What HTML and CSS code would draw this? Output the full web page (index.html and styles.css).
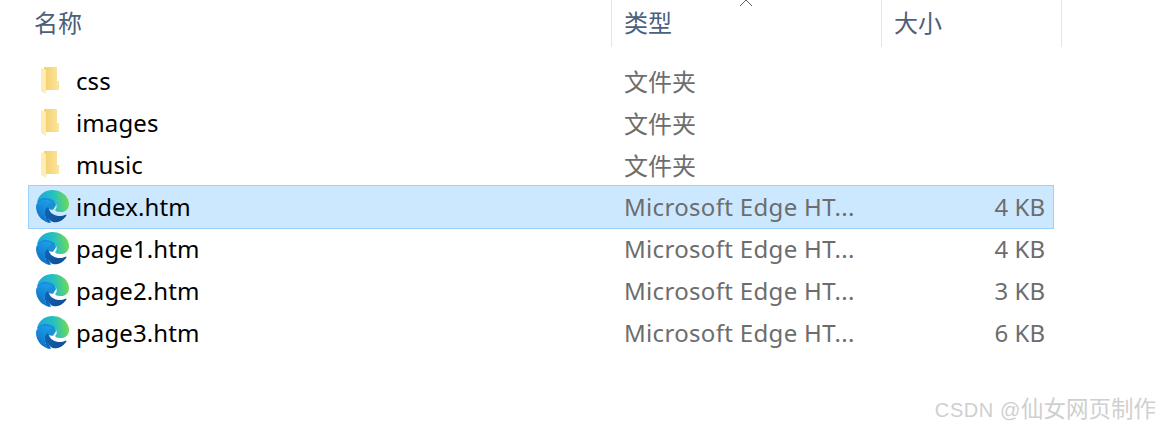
FILE: index.html
```html
<!DOCTYPE html>
<html lang="zh-CN">
<head>
  <meta charset="UTF-8">
  <title>文件列表</title>
  <link rel="stylesheet" href="styles.css">
</head>
<body>

<svg class="defs" width="0" height="0" aria-hidden="true">
  <defs>
    <linearGradient id="edgeTop" x1="0" y1="0.6" x2="1" y2="0.5">
      <stop offset="0" stop-color="#1ba6e0"/>
      <stop offset="0.55" stop-color="#26c0c0"/>
      <stop offset="1" stop-color="#74dc50"/>
    </linearGradient>
    <linearGradient id="edgeLeft" x1="0.7" y1="0" x2="0.3" y2="1">
      <stop offset="0" stop-color="#1b9fe8"/>
      <stop offset="1" stop-color="#0f6cc4"/>
    </linearGradient>
    <linearGradient id="edgeBottom" x1="0" y1="0" x2="1" y2="0.6">
      <stop offset="0" stop-color="#0e62b4"/>
      <stop offset="1" stop-color="#114f98"/>
    </linearGradient>
    <linearGradient id="folderBack" x1="0" y1="0" x2="1" y2="0">
      <stop offset="0" stop-color="#f4cf6c"/>
      <stop offset="1" stop-color="#fbe5a0"/>
    </linearGradient>
    <symbol id="edge" viewBox="0 0 24 24">
      <path fill="#1a8fd6" d="M0.5 9Q2 5 7 5Q11 5 14 7L14.5 11L12.4 14.4Q10.5 14.6 8.6 13.6L6.5 14L6 8.5Z"/>
      <path fill="#0e62b4" d="M6 17Q6 13 8.8 12.5L9 20L11 24L8 23Z"/>
      <path fill="url(#edgeBottom)" d="M21.86 17.86q.14 0 .25.12.1.13.1.25t-.11.33l-.32.46-.43.53-.44.5q-.21.25-.38.42l-.22.23q-.58.53-1.34 1.04-.76.51-1.6.91-.86.4-1.74.64t-1.67.24q-.9 0-1.69-.28-.8-.28-1.48-.78-.68-.5-1.22-1.17-.53-.66-.92-1.44-.38-.77-.58-1.6-.2-.83-.2-1.67 0-1 .32-1.96.33-.97.87-1.8.14.95.55 1.77.41.82 1.02 1.5.6.68 1.38 1.21.78.54 1.64.9.86.36 1.77.56.92.2 1.8.2 1.12 0 2.18-.24 1.06-.23 2.06-.72l.2-.1.2-.05z"/>
      <path fill="url(#edgeLeft)" d="M6.36 16.59q0 1.1.27 2.15.27 1.06.78 2.03.51.96 1.24 1.77.74.82 1.66 1.4-1.47-.2-2.8-.74-1.33-.55-2.48-1.37-1.15-.83-2.08-1.9-.92-1.07-1.58-2.33T.36 14.94Q0 13.54 0 12.06q0-.81.32-1.49.31-.68.83-1.23.53-.55 1.2-.96.66-.4 1.35-.66.74-.27 1.5-.39.78-.12 1.55-.12.7 0 1.42.1.72.12 1.4.35.68.23 1.32.57.63.35 1.16.83-.35 0-.7.07-.33.07-.65.23v-.02q-.63.28-1.2.74-.57.46-1.05 1.04-.48.58-.87 1.26-.38.67-.65 1.39-.27.71-.42 1.44-.15.72-.15 1.38z"/>
      <path fill="url(#edgeTop)" d="M11.96.06q1.7 0 3.33.39 1.63.38 3.07 1.15 1.43.77 2.62 1.93 1.18 1.16 1.98 2.7.49.94.76 1.96.28 1 .28 2.08 0 .89-.23 1.7-.24.8-.69 1.48-.45.68-1.1 1.22-.64.53-1.45.88-.54.24-1.11.36-.58.13-1.16.13-.42 0-.97-.03-.54-.03-1.1-.12-.55-.1-1.05-.28-.5-.19-.84-.5-.12-.09-.23-.24-.1-.16-.1-.33 0-.15.16-.35.16-.2.35-.5.2-.28.36-.68.16-.4.16-.95 0-1.06-.4-1.96-.4-.91-1.06-1.64-.66-.74-1.52-1.28-.86-.55-1.79-.89-.84-.3-1.72-.44-.87-.14-1.76-.14-1.55 0-3.06.45T.94 7.55q.71-1.74 1.81-3.13 1.1-1.38 2.52-2.35Q6.68 1.1 8.37.58q1.7-.52 3.58-.52Z"/>
    </symbol>
    <symbol id="folder" viewBox="0 0 18 27">
      <path fill="url(#folderBack)" d="M3 0H16V14H18V23H3Z"/>
      <path fill="#fdedb4" d="M0 1L5 3V27L0 24Z"/>
    </symbol>
  </defs>
</svg>

<div class="explorer">
  <div class="header">
    <div class="col-head col-name">名称</div>
    <div class="col-head col-type">类型</div>
    <div class="col-head col-size">大小</div>
    <svg class="sort-arrow" width="16" height="6" viewBox="0 0 16 6"><path d="M1 7L8 0L15 7" fill="none" stroke="#5c5c5c"/></svg>
  </div>

  <div class="rows">
    <div class="row">
      <div class="name"><span class="icon"><svg class="folder-icon"><use href="#folder"/></svg></span>css</div>
      <div class="type">文件夹</div>
      <div class="size"></div>
    </div>
    <div class="row">
      <div class="name"><span class="icon"><svg class="folder-icon"><use href="#folder"/></svg></span>images</div>
      <div class="type">文件夹</div>
      <div class="size"></div>
    </div>
    <div class="row">
      <div class="name"><span class="icon"><svg class="folder-icon"><use href="#folder"/></svg></span>music</div>
      <div class="type">文件夹</div>
      <div class="size"></div>
    </div>
    <div class="row selected">
      <div class="name"><span class="icon"><svg class="edge-icon"><use href="#edge"/></svg></span>index.htm</div>
      <div class="type latin">Microsoft Edge HT...</div>
      <div class="size">4 KB</div>
    </div>
    <div class="row">
      <div class="name"><span class="icon"><svg class="edge-icon"><use href="#edge"/></svg></span>page1.htm</div>
      <div class="type latin">Microsoft Edge HT...</div>
      <div class="size">4 KB</div>
    </div>
    <div class="row">
      <div class="name"><span class="icon"><svg class="edge-icon"><use href="#edge"/></svg></span>page2.htm</div>
      <div class="type latin">Microsoft Edge HT...</div>
      <div class="size">3 KB</div>
    </div>
    <div class="row">
      <div class="name"><span class="icon"><svg class="edge-icon"><use href="#edge"/></svg></span>page3.htm</div>
      <div class="type latin">Microsoft Edge HT...</div>
      <div class="size">6 KB</div>
    </div>
  </div>
</div>

<div class="watermark"><span class="mark-latin">CSDN @</span>仙女网页制作</div>

</body>
</html>
```

FILE: styles.css
```css
html, body {
  margin: 0;
  padding: 0;
}

body {
  width: 1159px;
  height: 429px;
  overflow: hidden;
  background-color: #fff;
  font-family: "Noto Sans", "Noto Sans CJK SC", sans-serif;
  font-size: 24px;
}

.defs {
  position: absolute;
}

.explorer {
  width: 1062px;
}

.header {
  position: relative;
  display: grid;
  grid-template-columns: 612px 270px 180px;
  height: 47px;
}

.col-head {
  box-sizing: border-box;
  border-right: 1px solid #e5e5e5;
  padding-left: 12px;
  padding-bottom: 2px;
  line-height: 45px;
  color: #4c607a;
}

.col-name {
  padding-left: 34px;
}

.sort-arrow {
  position: absolute;
  left: 738px;
  top: 0;
}

.rows {
  margin-top: 13px;
  margin-left: 28px;
  width: 1026px;
}

.row {
  box-sizing: border-box;
  display: grid;
  grid-template-columns: 584px 1fr 70px;
  align-items: center;
  height: 42px;
  border: 1px solid transparent;
}

.row.selected {
  height: 44px;
  margin: -1px 0;
  background-color: #cce8ff;
  border-color: #99d1ff;
}

.name {
  display: flex;
  align-items: center;
  padding-bottom: 2px;
  color: #000;
  letter-spacing: 0.1px;
}

.icon {
  display: flex;
  justify-content: center;
  align-items: center;
  width: 47px;
  flex: none;
}

.folder-icon {
  width: 18px;
  height: 27px;
  margin-right: 5px;
}

.edge-icon {
  width: 33px;
  height: 33px;
}

.type {
  padding-left: 11px;
  padding-bottom: 2px;
  color: #6d6d6d;
}

.type.latin {
  letter-spacing: 0.32px;
}

.size {
  padding-right: 8px;
  padding-bottom: 2px;
  text-align: right;
  color: #6d6d6d;
}

.watermark {
  position: absolute;
  right: 3px;
  bottom: 6px;
  font-family: "Liberation Sans", "Noto Sans CJK SC", sans-serif;
  font-size: 22.5px;
  color: #cfcfcf;
}

.mark-latin {
  font-size: 20px;
  letter-spacing: 0.6px;
}
```
